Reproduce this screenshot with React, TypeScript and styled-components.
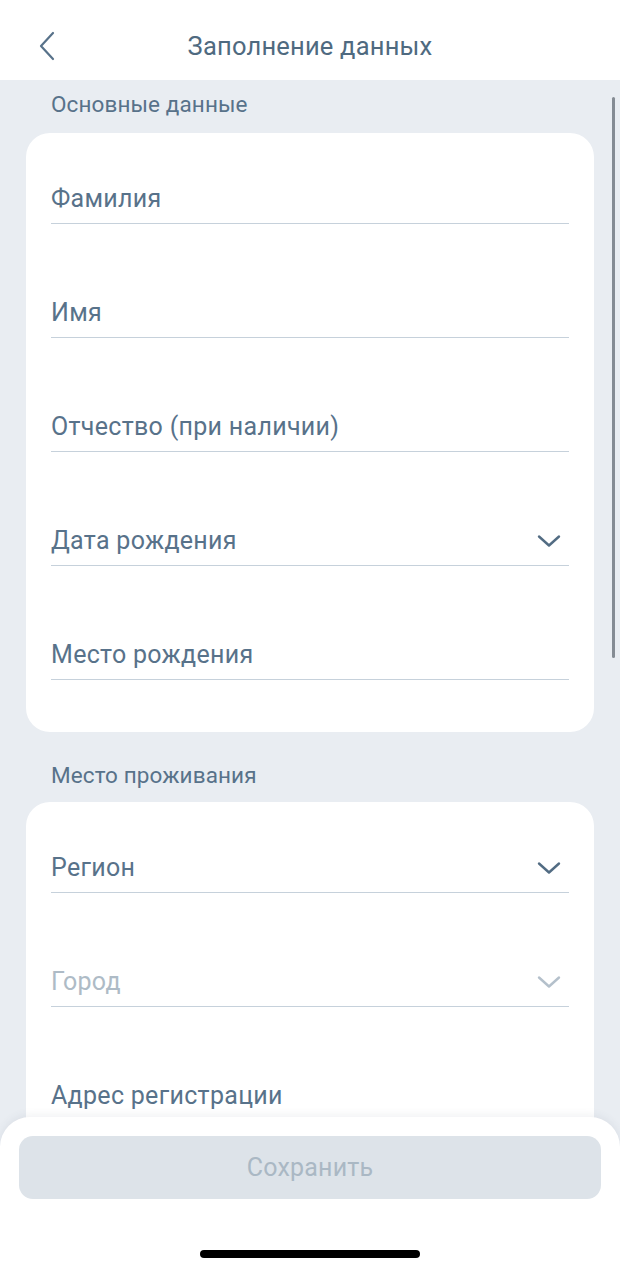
import React from 'react';
import styled, { createGlobalStyle } from 'styled-components';

const GlobalStyle = createGlobalStyle`
  html, body {
    margin: 0;
    padding: 0;
    background: #e9edf2;
  }
  body {
    font-family: Roboto, "Noto Sans", "Liberation Sans", sans-serif;
  }
`;

type FieldData = {
  label: string;
  select?: boolean;
  disabled?: boolean;
};

const mainFields: FieldData[] = [
  { label: 'Фамилия' },
  { label: 'Имя' },
  { label: 'Отчество (при наличии)' },
  { label: 'Дата рождения', select: true },
  { label: 'Место рождения' },
];

const addressFields: FieldData[] = [
  { label: 'Регион', select: true },
  { label: 'Город', select: true, disabled: true },
  { label: 'Адрес регистрации' },
];

const ChevronDown = ({ color }: { color: string }) => (
  <svg width="24" height="14" viewBox="0 0 24 14" fill="none">
    <path d="M2 2.5 L12 11.5 L22 2.5" stroke={color} strokeWidth="2.4" strokeLinecap="round" strokeLinejoin="round" />
  </svg>
);

const BackIcon = () => (
  <svg width="18" height="30" viewBox="0 0 18 30" fill="none">
    <path d="M15 2 L3 15 L15 28" stroke="#58728a" strokeWidth="2.2" strokeLinecap="round" strokeLinejoin="round" />
  </svg>
);

const Field: React.FC<FieldData> = ({ label, select, disabled }) => (
  <FieldRow>
    <FieldLabel $disabled={disabled}>{label}</FieldLabel>
    {select && <ChevronDown color={disabled ? '#b4c0cb' : '#526c83'} />}
  </FieldRow>
);

export default function App() {
  return (
    <>
      <GlobalStyle />
      <Screen>
        <Header>
          <BackButton>
            <BackIcon />
          </BackButton>
          <Title>Заполнение данных</Title>
        </Header>
        <Content>
          <SectionTitle>Основные данные</SectionTitle>
          <Card>
            {mainFields.map((f) => (
              <Field key={f.label} {...f} />
            ))}
          </Card>
          <SectionTitle $spaced>Место проживания</SectionTitle>
          <Card>
            {addressFields.map((f) => (
              <Field key={f.label} {...f} />
            ))}
          </Card>
        </Content>
        <Scrollbar />
        <BottomSheet>
          <SaveButton disabled>Сохранить</SaveButton>
          <HomeIndicator />
        </BottomSheet>
      </Screen>
    </>
  );
}

const Screen = styled.div`
  position: relative;
  width: 620px;
  height: 1272px;
  overflow: hidden;
  background: #e9edf2;
`;

const Header = styled.header`
  position: relative;
  height: 80px;
  background: #ffffff;
  display: flex;
  align-items: center;
  justify-content: center;
  padding-top: 12px;
  box-sizing: border-box;
`;

const BackButton = styled.button`
  position: absolute;
  left: 38px;
  top: 31px;
  padding: 0;
  border: 0;
  background: none;
  display: flex;
`;

const Title = styled.h1`
  margin: 0;
  font-size: 25.5px;
  line-height: 30px;
  font-weight: 400;
  letter-spacing: 0.2px;
  color: #4f6a80;
`;

const Content = styled.main`
  padding: 0 26px;
`;

const SectionTitle = styled.h2<{ $spaced?: boolean }>`
  margin: ${(p) => (p.$spaced ? '30px' : '11px')} 0 ${(p) => (p.$spaced ? '14px' : '16px')} 25px;
  font-size: 22.5px;
  line-height: 26px;
  font-weight: 400;
  letter-spacing: 0.1px;
  color: #58728a;
`;

const Card = styled.section`
  background: #ffffff;
  border-radius: 24px;
  padding: 52px 25px 52px;
  display: flex;
  flex-direction: column;
  gap: 75px;
`;

const FieldRow = styled.div`
  display: flex;
  align-items: center;
  justify-content: space-between;
  padding: 0 8px 10px 0;
  border-bottom: 1px solid #c6d1db;
`;

const FieldLabel = styled.span<{ $disabled?: boolean }>`
  font-size: 25px;
  line-height: 28px;
  letter-spacing: 0.3px;
  color: ${(p) => (p.$disabled ? '#aebbc6' : '#58728a')};
`;

const Scrollbar = styled.div`
  position: absolute;
  right: 5px;
  top: 97px;
  width: 3.5px;
  height: 561px;
  border-radius: 2px;
  background: #858c94;
`;

const BottomSheet = styled.div`
  position: absolute;
  left: 0;
  right: 0;
  bottom: 0;
  height: 155px;
  background: #ffffff;
  border-radius: 30px 30px 0 0;
  box-shadow: 0 -2px 8px rgba(60, 80, 100, 0.08);
  padding: 19px 19px 0;
  box-sizing: border-box;
  display: flex;
  flex-direction: column;
  align-items: center;
`;

const SaveButton = styled.button`
  width: 100%;
  height: 63px;
  border: 0;
  border-radius: 14px;
  background: #dde3e9;
  color: #aab8c4;
  font-family: Roboto, "Noto Sans", "Liberation Sans", sans-serif;
  font-size: 25px;
  letter-spacing: 0.2px;
`;

const HomeIndicator = styled.div`
  margin-top: 51px;
  width: 220px;
  height: 8px;
  border-radius: 4px;
  background: #000000;
`;
